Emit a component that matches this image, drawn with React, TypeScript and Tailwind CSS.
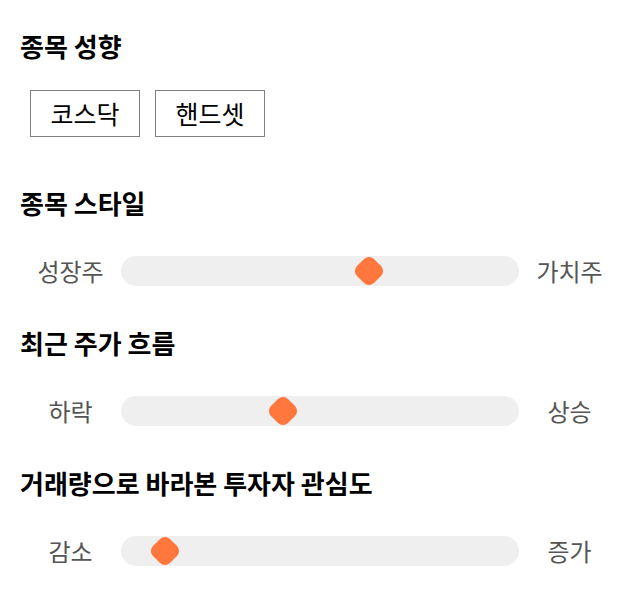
const FONT = "font-['Noto_Sans_CJK_KR','Noto_Sans',sans-serif]";

function Slider({ left, right, pos }: { left: string; right: string; pos: number }) {
  return (
    <div className="flex items-center h-[30px]">
      <div className="w-[101px] text-center text-[24px] leading-[30px] text-[#555]">{left}</div>
      <div className="relative flex-1 h-[30px] rounded-full bg-[#efefef]">
        <div
          className="absolute top-1/2 w-[24px] h-[24px] -translate-x-1/2 -translate-y-1/2 rotate-45 rounded-[7px] bg-[#ff773d]"
          style={{ left: `${pos}%` }}
        />
      </div>
      <div className="w-[101px] text-center text-[24px] leading-[30px] text-[#555]">{right}</div>
    </div>
  );
}

export default function App() {
  return (
    <div className={`${FONT} bg-white w-[640px] h-[606px] px-[20px] pt-[30px]`}>
      <h2 className="text-[26px] font-bold leading-[32px] text-black">종목 성향</h2>
      <div className="flex gap-[15px] mt-[28px] ml-[10px]">
        <button className="w-[110px] h-[47px] border border-[#808080] text-[25px] text-black">코스닥</button>
        <button className="w-[110px] h-[47px] border border-[#808080] text-[25px] text-black">핸드셋</button>
      </div>

      <h2 className="text-[26px] font-bold leading-[32px] text-black mt-[50px]">종목 스타일</h2>
      <div className="mt-[37px]">
        <Slider left="성장주" right="가치주" pos={62.3} />
      </div>

      <h2 className="text-[26px] font-bold leading-[32px] text-black mt-[41px]">최근 주가 흐름</h2>
      <div className="mt-[37px]">
        <Slider left="하락" right="상승" pos={40.7} />
      </div>

      <h2 className="text-[26px] font-bold leading-[32px] text-black mt-[41px]">거래량으로 바라본 투자자 관심도</h2>
      <div className="mt-[37px]">
        <Slider left="감소" right="증가" pos={11} />
      </div>
    </div>
  );
}
